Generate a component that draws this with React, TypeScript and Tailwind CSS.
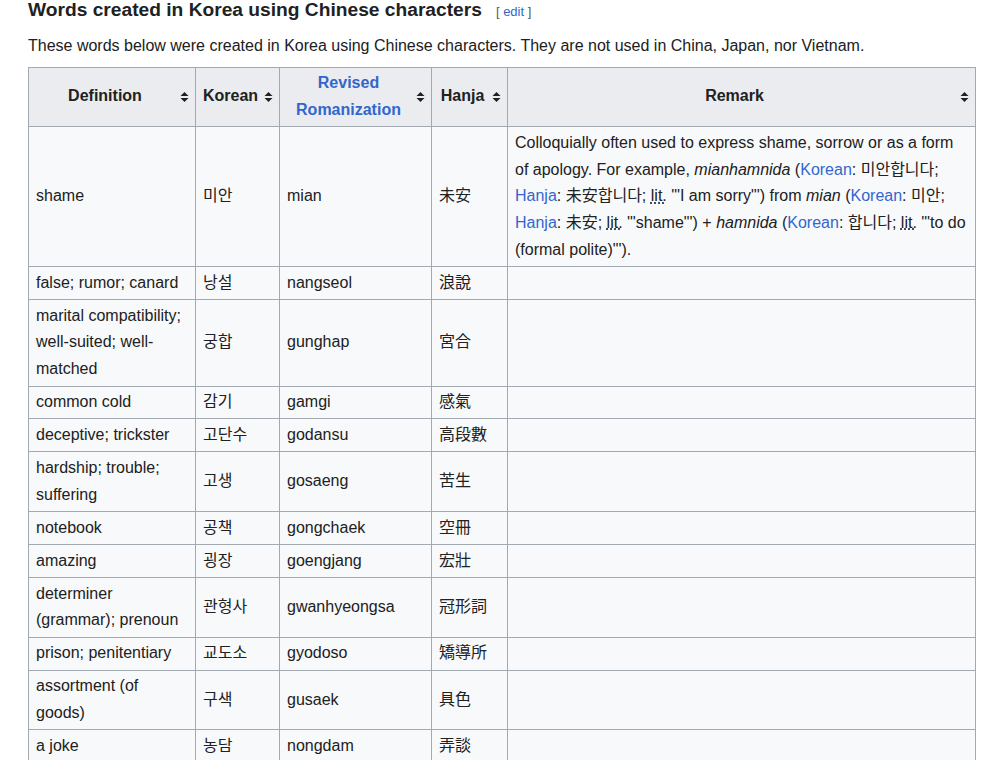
import type { ReactNode } from 'react'

const rows: [string, string, string, string][] = [
  ['false; rumor; canard', '낭설', 'nangseol', '浪說'],
  ['marital compatibility; well-suited; well-matched', '궁합', 'gunghap', '宮合'],
  ['common cold', '감기', 'gamgi', '感氣'],
  ['deceptive; trickster', '고단수', 'godansu', '高段數'],
  ['hardship; trouble; suffering', '고생', 'gosaeng', '苦生'],
  ['notebook', '공책', 'gongchaek', '空冊'],
  ['amazing', '굉장', 'goengjang', '宏壯'],
  ['determiner (grammar); prenoun', '관형사', 'gwanhyeongsa', '冠形詞'],
  ['prison; penitentiary', '교도소', 'gyodoso', '矯導所'],
  ['assortment (of goods)', '구색', 'gusaek', '具色'],
  ['a joke', '농담', 'nongdam', '弄談'],
]

function SortIcon() {
  return (
    <svg width="9" height="11" viewBox="0 0 9 11" className="absolute right-[6px] top-1/2 -translate-y-1/2">
      <path d="M4.5 0.5 L8.5 4.5 H0.5 Z" fill="#202122" />
      <path d="M4.5 10.5 L8.5 6.5 H0.5 Z" fill="#202122" />
    </svg>
  )
}

function Th({ children, blue }: { children: ReactNode; blue?: boolean }) {
  return (
    <th
      className={`relative border border-[#a2a9b1] bg-[#eaecf0] py-[2.6px] pl-[7px] pr-[21px] text-center align-middle font-bold ${
        blue ? 'text-[#3366cc]' : 'text-[#202122]'
      }`}
    >
      {children}
      <SortIcon />
    </th>
  )
}

function Td({ children }: { children: ReactNode }) {
  return <td className="border border-[#a2a9b1] px-[7px] py-[2.6px] align-middle">{children}</td>
}

function Link({ children }: { children: ReactNode }) {
  return <span className="text-[#3366cc]">{children}</span>
}

function Lit() {
  return <span className="underline decoration-dotted underline-offset-1">lit.</span>
}

export default function App() {
  return (
    <div
      className="min-h-[760px] bg-white px-[28px] text-[16px] text-[#202122]"
      style={{ fontFamily: '"Liberation Sans", Arial, "Noto Sans CJK KR", sans-serif' }}
    >
      <div className="flex items-baseline gap-[14px]">
        <h3 className="text-[19.2px] font-bold leading-[20px]">Words created in Korea using Chinese characters</h3>
        <span className="text-[13px] text-[#54595d]">
          [ <span className="text-[#3366cc]">edit</span> ]
        </span>
      </div>
      <p className="mt-[11px] leading-[26px]">
        These words below were created in Korea using Chinese characters. They are not used in China, Japan, nor
        Vietnam.
      </p>
      <table className="mt-[8px] w-[947px] table-fixed border-collapse bg-[#f8f9fa] leading-[26.75px]">
        <colgroup>
          <col className="w-[167px]" />
          <col className="w-[84px]" />
          <col className="w-[152px]" />
          <col className="w-[76px]" />
          <col className="w-[468px]" />
        </colgroup>
        <thead>
          <tr>
            <Th>Definition</Th>
            <Th>Korean</Th>
            <Th blue>Revised Romanization</Th>
            <Th>Hanja</Th>
            <Th>Remark</Th>
          </tr>
        </thead>
        <tbody>
          <tr>
            <Td>shame</Td>
            <Td>미안</Td>
            <Td>mian</Td>
            <Td>未安</Td>
            <Td>
              Colloquially often used to express shame, sorrow or as a form of apology. For example,{' '}
              <i>mianhamnida</i> (<Link>Korean</Link>: 미안합니다; <Link>Hanja</Link>: 未安합니다; <Lit /> '"I am
              sorry"') from <i>mian</i> (<Link>Korean</Link>: 미안; <Link>Hanja</Link>: 未安; <Lit /> '"shame"') +{' '}
              <i>hamnida</i> (<Link>Korean</Link>: 합니다; <Lit /> '"to do (formal polite)"').
            </Td>
          </tr>
          {rows.map(([def, ko, rr, hanja]) => (
            <tr key={rr}>
              <Td>{def}</Td>
              <Td>{ko}</Td>
              <Td>{rr}</Td>
              <Td>{hanja}</Td>
              <Td>{''}</Td>
            </tr>
          ))}
        </tbody>
      </table>
    </div>
  )
}
